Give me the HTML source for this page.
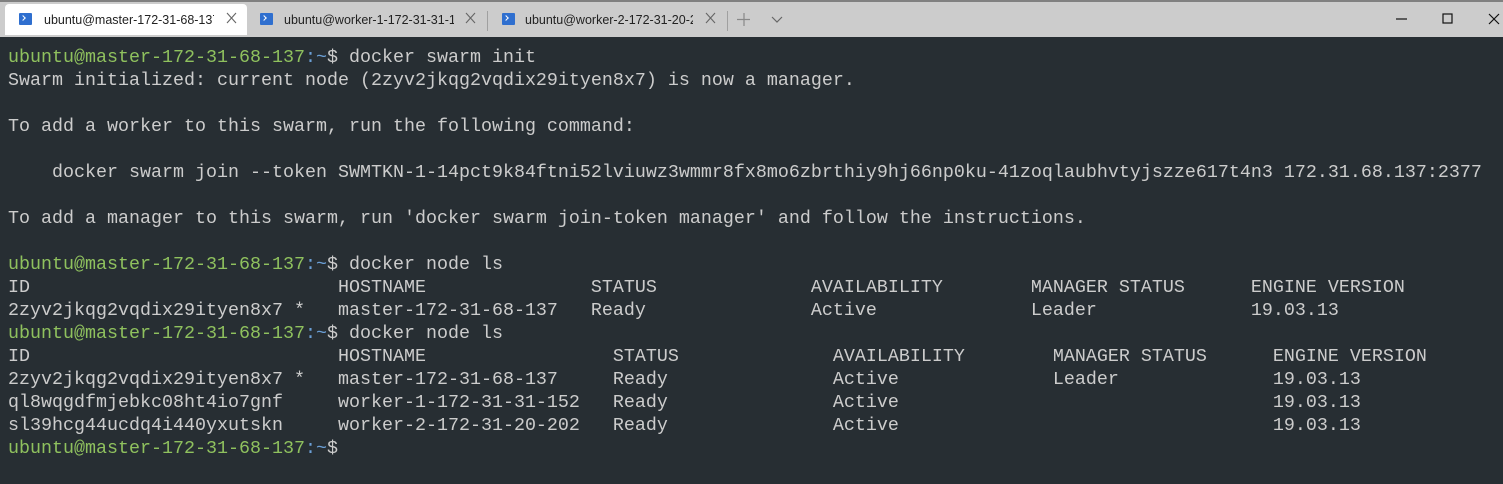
<!DOCTYPE html>
<html><head><meta charset="utf-8"><style>
html,body{margin:0;padding:0;width:1503px;height:484px;overflow:hidden;background:#272e33;font-family:"Liberation Sans",sans-serif}
.bar{position:absolute;left:0;top:0;width:1503px;height:37px;background:#cccccc;border-top:2px solid #808080;box-sizing:border-box}
.a{position:absolute;left:5px;top:4px;width:242px;height:31px;background:#fff;border-radius:4px 4px 0 0}
.ic{position:absolute;top:13px;width:13px;height:12px;background:#2f6fcf;border-radius:1px}
.ic:after{content:"";position:absolute;left:2px;top:3px;width:3px;height:3px;border-right:1.5px solid #fff;border-bottom:1.5px solid #fff;transform:rotate(-45deg)}
.tx{position:absolute;top:12px;font-size:12.5px;color:#222;white-space:nowrap;overflow:hidden;line-height:16px}
.x{position:absolute;top:11px}
.sep{position:absolute;top:11px;width:1px;height:20px;background:#a0a0a0}
pre{position:absolute;left:8px;top:46px;margin:0;font-family:"Liberation Mono","DejaVu Sans Mono",monospace;font-size:18.33px;line-height:23px;color:#cccccc}
.g{color:#8fc15e}.b{color:#6b9fd6}
</style></head><body>
<div class="bar"></div>
<div class="a"></div>
<div class="ic" style="left:19px"></div><div class="tx" style="left:44px;width:170px">ubuntu@master-172-31-68-137</div>
<svg class="x" style="left:226px" width="12" height="14"><path d="M1 2L10 12M10 2L1 12" stroke="#666" stroke-width="1.1"/></svg>
<div class="ic" style="left:260px"></div><div class="tx" style="left:284px;width:170px">ubuntu@worker-1-172-31-31-1</div>
<svg class="x" style="left:465px" width="12" height="14"><path d="M1 2L10 12M10 2L1 12" stroke="#666" stroke-width="1.1"/></svg>
<div class="sep" style="left:487px"></div>
<div class="ic" style="left:502px"></div><div class="tx" style="left:525px;width:168px">ubuntu@worker-2-172-31-20-2</div>
<svg class="x" style="left:705px" width="12" height="14"><path d="M1 2L10 12M10 2L1 12" stroke="#666" stroke-width="1.1"/></svg>
<div class="sep" style="left:727px"></div>
<svg style="position:absolute;left:737px;top:13px" width="14" height="14"><path d="M7 0V13M0 6.5H13" stroke="#888" stroke-width="1.2"/></svg>
<svg style="position:absolute;left:771px;top:16px" width="12" height="8"><path d="M1 1L6 6L11 1" stroke="#666" fill="none" stroke-width="1.2"/></svg>
<svg style="position:absolute;left:1396px;top:18px" width="12" height="2"><path d="M0 1H11" stroke="#111" stroke-width="1.2"/></svg>
<svg style="position:absolute;left:1442px;top:13px" width="12" height="12"><rect x="1" y="1" width="9" height="9" stroke="#111" fill="none" stroke-width="1.2"/></svg>
<svg style="position:absolute;left:1488px;top:13px" width="12" height="12"><path d="M1 1L11 11M11 1L1 11" stroke="#111" stroke-width="1.2"/></svg>
<pre><span class="g">ubuntu@master-172-31-68-137</span><span class="b">:~</span>$ docker swarm init
Swarm initialized: current node (2zyv2jkqg2vqdix29ityen8x7) is now a manager.

To add a worker to this swarm, run the following command:

    docker swarm join --token SWMTKN-1-14pct9k84ftni52lviuwz3wmmr8fx8mo6zbrthiy9hj66np0ku-41zoqlaubhvtyjszze617t4n3 172.31.68.137:2377

To add a manager to this swarm, run 'docker swarm join-token manager' and follow the instructions.

<span class="g">ubuntu@master-172-31-68-137</span><span class="b">:~</span>$ docker node ls
ID                            HOSTNAME               STATUS              AVAILABILITY        MANAGER STATUS      ENGINE VERSION
2zyv2jkqg2vqdix29ityen8x7 *   master-172-31-68-137   Ready               Active              Leader              19.03.13
<span class="g">ubuntu@master-172-31-68-137</span><span class="b">:~</span>$ docker node ls
ID                            HOSTNAME                 STATUS              AVAILABILITY        MANAGER STATUS      ENGINE VERSION
2zyv2jkqg2vqdix29ityen8x7 *   master-172-31-68-137     Ready               Active              Leader              19.03.13
ql8wqgdfmjebkc08ht4io7gnf     worker-1-172-31-31-152   Ready               Active                                  19.03.13
sl39hcg44ucdq4i440yxutskn     worker-2-172-31-20-202   Ready               Active                                  19.03.13
<span class="g">ubuntu@master-172-31-68-137</span><span class="b">:~</span>$</pre>
</body></html>
